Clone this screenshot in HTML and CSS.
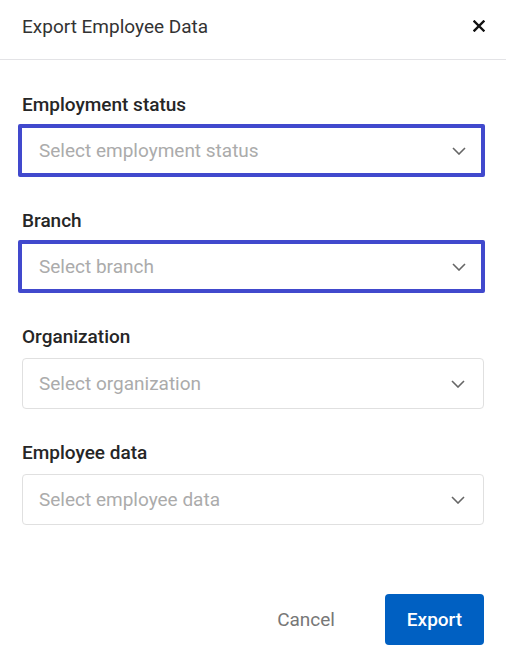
FILE: index.html
```html
<!DOCTYPE html>
<html lang="en">
<head>
<meta charset="utf-8">
<title>Export Employee Data</title>
<link rel="stylesheet" href="styles.css">
</head>
<body>
<div class="dialog">
  <header class="dialog-header">
    <h1 class="dialog-title">Export Employee Data</h1>
    <button class="close-btn" aria-label="Close">
      <svg width="12" height="12" viewBox="0 0 12 12"><path d="M1.5 1.5 L10.5 10.5 M10.5 1.5 L1.5 10.5" stroke="#111" stroke-width="2.4" stroke-linecap="square" fill="none"/></svg>
    </button>
  </header>
  <div class="dialog-body">
    <div class="field">
      <label class="field-label">Employment status</label>
      <div class="select select-focus">
        <span class="placeholder">Select employment status</span>
        <svg class="chevron" width="14" height="8" viewBox="0 0 14 8"><path d="M1 1 L7 7 L13 1" stroke="#666" stroke-width="1.6" fill="none"/></svg>
      </div>
    </div>
    <div class="field">
      <label class="field-label">Branch</label>
      <div class="select select-focus">
        <span class="placeholder">Select branch</span>
        <svg class="chevron" width="14" height="8" viewBox="0 0 14 8"><path d="M1 1 L7 7 L13 1" stroke="#666" stroke-width="1.6" fill="none"/></svg>
      </div>
    </div>
    <div class="field">
      <label class="field-label">Organization</label>
      <div class="select">
        <span class="placeholder">Select organization</span>
        <svg class="chevron" width="14" height="8" viewBox="0 0 14 8"><path d="M1 1 L7 7 L13 1" stroke="#666" stroke-width="1.6" fill="none"/></svg>
      </div>
    </div>
    <div class="field">
      <label class="field-label">Employee data</label>
      <div class="select">
        <span class="placeholder">Select employee data</span>
        <svg class="chevron" width="14" height="8" viewBox="0 0 14 8"><path d="M1 1 L7 7 L13 1" stroke="#666" stroke-width="1.6" fill="none"/></svg>
      </div>
    </div>
  </div>
  <footer class="dialog-footer">
    <button class="btn-cancel">Cancel</button>
    <button class="btn-export">Export</button>
  </footer>
</div>
</body>
</html>
```

FILE: styles.css
```css
html, body {
  margin: 0;
  padding: 0;
  background: #fff;
  font-family: Roboto, "Liberation Sans", Arial, sans-serif;
}
.dialog {
  width: 506px;
  height: 667px;
  display: flex;
  flex-direction: column;
}
.dialog-header {
  height: 60px;
  box-sizing: border-box;
  border-bottom: 1px solid #e3e3e6;
  display: flex;
  align-items: center;
  justify-content: space-between;
  padding: 0 22px 7px 22px;
}
.dialog-title {
  margin: 0;
  font-size: 19px;
  font-weight: 400;
  color: #333;
}
.close-btn {
  border: none;
  background: none;
  padding: 0;
  width: 12px;
  height: 12px;
  display: flex;
  margin-right: -1px;
}
.dialog-body {
  padding: 34px 22px 0 22px;
  display: flex;
  flex-direction: column;
  gap: 33px;
}
.field {
  display: flex;
  flex-direction: column;
}
.field-label {
  font-size: 19px;
  line-height: 22px;
  font-weight: 500;
  color: #262626;
  margin-bottom: 10px;
}
.select {
  height: 51px;
  box-sizing: border-box;
  border: 1px solid #e0e0e0;
  border-radius: 4px;
  display: flex;
  align-items: center;
  justify-content: space-between;
  padding: 0 18px 0 16px;
}
.select-focus {
  height: 53px;
  border: 4px solid #4149cd;
  border-radius: 2px;
  margin: -2px -1px 0 -4px;
  padding: 0 15px 0 17px;
}
.placeholder {
  font-size: 19px;
  color: #ababab;
}
.chevron {
  display: block;
}
.dialog-footer {
  margin-top: 69px;
  display: flex;
  justify-content: flex-end;
  align-items: center;
  gap: 50px;
  padding: 0 22px;
}
.btn-cancel {
  border: none;
  background: none;
  font-family: inherit;
  font-size: 19px;
  color: #777;
  padding: 0;
}
.btn-export {
  width: 99px;
  height: 51px;
  border: none;
  border-radius: 4px;
  background: #0060c2;
  color: #fff;
  font-family: inherit;
  font-size: 19px;
  font-weight: 500;
  padding: 0;
}
```
